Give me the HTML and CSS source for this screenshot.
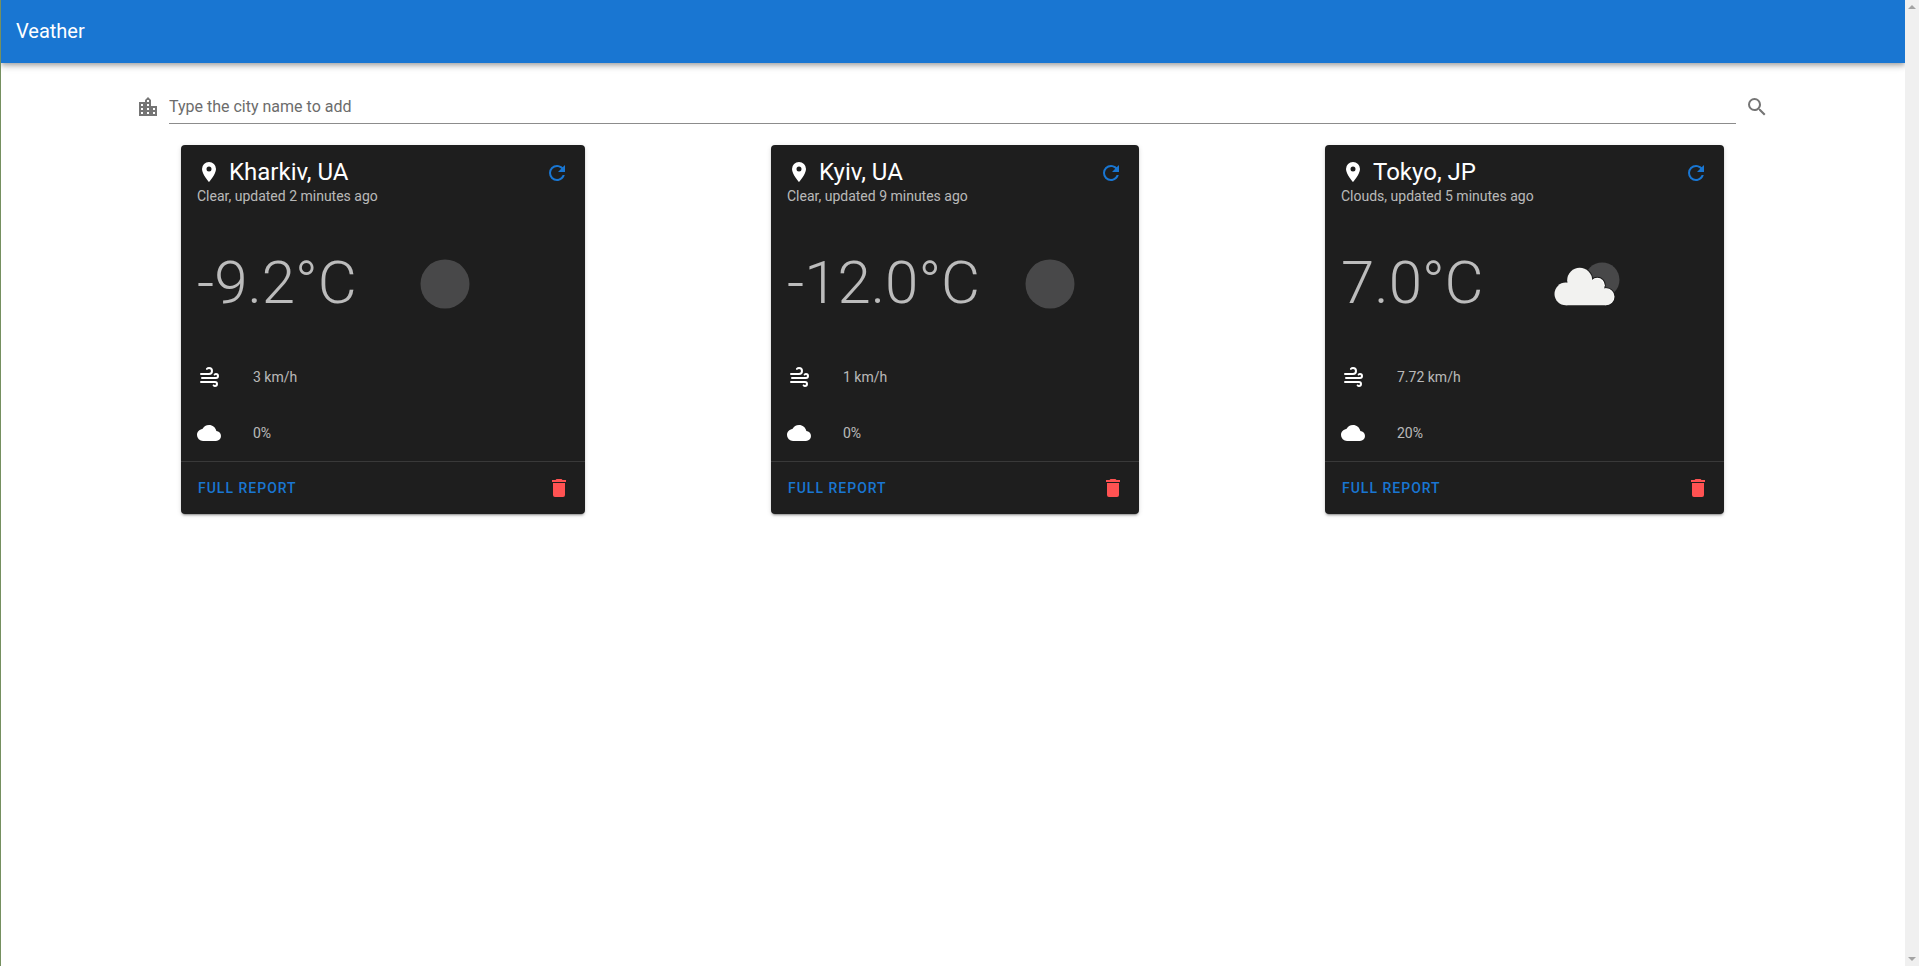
FILE: index.html
```html
<!DOCTYPE html>
<html lang="en">
<head>
<meta charset="utf-8">
<meta name="viewport" content="width=device-width, initial-scale=1">
<title>Veather</title>
<link rel="stylesheet" href="styles.css">
</head>
<body>
<svg class="sprite" aria-hidden="true">
  <symbol id="city" viewBox="0 0 24 24"><path d="M19,15H17V13H19M19,19H17V17H19M13,7H11V5H13M13,11H11V9H13M13,15H11V13H13M13,19H11V17H13M7,11H5V9H7M7,15H5V13H7M7,19H5V17H7M15,11V5L12,2L9,5V7H3V21H21V11H15Z"/></symbol>
  <symbol id="magnify" viewBox="0 0 24 24"><path d="M9.5,3A6.5,6.5 0 0,1 16,9.5C16,11.11 15.41,12.59 14.44,13.73L14.71,14H15.5L20.5,19L19,20.5L14,15.5V14.71L13.73,14.44C12.59,15.41 11.11,16 9.5,16A6.5,6.5 0 0,1 3,9.5A6.5,6.5 0 0,1 9.5,3M9.5,5C7,5 5,7 5,9.5C5,12 7,14 9.5,14C12,14 14,12 14,9.5C14,7 12,5 9.5,5Z"/></symbol>
  <symbol id="marker" viewBox="0 0 24 24"><path d="M12,11.5A2.5,2.5 0 0,1 9.5,9A2.5,2.5 0 0,1 12,6.5A2.5,2.5 0 0,1 14.5,9A2.5,2.5 0 0,1 12,11.5M12,2A7,7 0 0,0 5,9C5,14.25 12,22 12,22C12,22 19,14.25 19,9A7,7 0 0,0 12,2Z"/></symbol>
  <symbol id="refresh" viewBox="0 0 24 24"><path d="M17.65,6.35C16.2,4.9 14.21,4 12,4A8,8 0 0,0 4,12A8,8 0 0,0 12,20C15.73,20 18.84,17.45 19.73,14H17.65C16.83,16.33 14.61,18 12,18A6,6 0 0,1 6,12A6,6 0 0,1 12,6C13.66,6 15.14,6.69 16.22,7.78L13,11H20V4L17.65,6.35Z"/></symbol>
  <symbol id="wind" viewBox="0 0 24 24"><path d="M4,10A1,1 0 0,1 3,9A1,1 0 0,1 4,8H12A2,2 0 0,0 14,6A2,2 0 0,0 12,4C11.45,4 10.95,4.22 10.59,4.59C10.2,5 9.56,5 9.17,4.59C8.78,4.2 8.78,3.56 9.17,3.17C9.9,2.45 10.9,2 12,2A4,4 0 0,1 16,6A4,4 0 0,1 12,10H4M19,12A1,1 0 0,0 20,11A1,1 0 0,0 19,10C18.72,10 18.47,10.11 18.29,10.29C17.9,10.68 17.27,10.68 16.88,10.29C16.5,9.9 16.5,9.27 16.88,8.88C17.42,8.34 18.17,8 19,8A3,3 0 0,1 22,11A3,3 0 0,1 19,14H5A1,1 0 0,1 4,13A1,1 0 0,1 5,12H19M18,18H4A1,1 0 0,1 3,17A1,1 0 0,1 4,16H18A3,3 0 0,1 21,19A3,3 0 0,1 18,22C17.17,22 16.42,21.66 15.88,21.12C15.5,20.73 15.5,20.1 15.88,19.71C16.27,19.32 16.9,19.32 17.29,19.71C17.47,19.89 17.72,20 18,20A1,1 0 0,0 19,19A1,1 0 0,0 18,18Z"/></symbol>
  <symbol id="cloud" viewBox="0 0 24 24"><path d="M19.35,10.03C18.67,6.59 15.64,4 12,4C9.11,4 6.6,5.64 5.35,8.03C2.34,8.36 0,10.9 0,14A6,6 0 0,0 6,20H19A5,5 0 0,0 24,15C24,12.36 21.95,10.22 19.35,10.03Z"/></symbol>
  <symbol id="delete" viewBox="0 0 24 24"><path d="M19,4H15.5L14.5,3H9.5L8.5,4H5V6H19M6,19A2,2 0 0,0 8,21H16A2,2 0 0,0 18,19V7H6V19Z"/></symbol>
</svg>
<div class="app">
  <header class="app-bar"><h1 class="app-title">Veather</h1></header>
  <main class="content">
    <form class="search" role="search">
      <label class="search-label" for="city-name" aria-label="City name"><svg class="icon"><use href="#city"/></svg></label>
      <input class="search-input" id="city-name" type="text" placeholder="Type the city name to add">
      <button class="icon-button search-button" type="button" aria-label="Search"><svg class="icon"><use href="#magnify"/></svg></button>
    </form>
    <div class="cards">
      <article class="card">
        <header class="card-header">
          <div class="card-heading">
            <h2 class="card-title"><svg class="icon"><use href="#marker"/></svg>Kharkiv, UA</h2>
            <p class="card-subtitle">Clear, updated 2 minutes ago</p>
          </div>
          <button class="icon-button refresh" type="button" aria-label="Refresh"><svg class="icon"><use href="#refresh"/></svg></button>
        </header>
        <div class="conditions">
          <div class="temperature">-9.2°C</div>
          <div class="weather"><svg class="weather-image" viewBox="0 0 100 100"><circle class="moon" cx="50" cy="50" r="24.5"/></svg></div>
        </div>
        <ul class="details">
          <li class="detail"><svg class="icon"><use href="#wind"/></svg>3 km/h</li>
          <li class="detail"><svg class="icon"><use href="#cloud"/></svg>0%</li>
        </ul>
        <footer class="card-actions">
          <button class="report" type="button">FULL REPORT</button>
          <button class="icon-button delete" type="button" aria-label="Delete"><svg class="icon"><use href="#delete"/></svg></button>
        </footer>
      </article>
      <article class="card">
        <header class="card-header">
          <div class="card-heading">
            <h2 class="card-title"><svg class="icon"><use href="#marker"/></svg>Kyiv, UA</h2>
            <p class="card-subtitle">Clear, updated 9 minutes ago</p>
          </div>
          <button class="icon-button refresh" type="button" aria-label="Refresh"><svg class="icon"><use href="#refresh"/></svg></button>
        </header>
        <div class="conditions">
          <div class="temperature">-12.0°C</div>
          <div class="weather"><svg class="weather-image" viewBox="0 0 100 100"><circle class="moon" cx="50" cy="50" r="24.5"/></svg></div>
        </div>
        <ul class="details">
          <li class="detail"><svg class="icon"><use href="#wind"/></svg>1 km/h</li>
          <li class="detail"><svg class="icon"><use href="#cloud"/></svg>0%</li>
        </ul>
        <footer class="card-actions">
          <button class="report" type="button">FULL REPORT</button>
          <button class="icon-button delete" type="button" aria-label="Delete"><svg class="icon"><use href="#delete"/></svg></button>
        </footer>
      </article>
      <article class="card">
        <header class="card-header">
          <div class="card-heading">
            <h2 class="card-title"><svg class="icon"><use href="#marker"/></svg>Tokyo, JP</h2>
            <p class="card-subtitle">Clouds, updated 5 minutes ago</p>
          </div>
          <button class="icon-button refresh" type="button" aria-label="Refresh"><svg class="icon"><use href="#refresh"/></svg></button>
        </header>
        <div class="conditions">
          <div class="temperature">7.0°C</div>
          <div class="weather">
            <svg class="weather-image" viewBox="0 0 100 100">
              <circle class="moon" cx="65.2" cy="45.8" r="17.3"/>
              <g class="cloud-gap"><circle cx="42.7" cy="46.3" r="12.5"/><circle cx="60.3" cy="51.3" r="7.5"/><circle cx="69" cy="62.7" r="8.5"/></g>
              <g class="cloud-rim"><circle cx="60.3" cy="51.3" r="7.5"/><circle cx="69" cy="62.7" r="8.5"/></g>
              <g class="cloud-body"><circle cx="28.8" cy="59.9" r="11.3"/><circle cx="42.7" cy="46.3" r="12.5"/><circle cx="59.6" cy="52.1" r="7.3"/><circle cx="68.4" cy="62.8" r="8.3"/><path d="M28.8 71.2V52L42 44L60 52L69 58V71.2Z"/></g>
            </svg>
          </div>
        </div>
        <ul class="details">
          <li class="detail"><svg class="icon"><use href="#wind"/></svg>7.72 km/h</li>
          <li class="detail"><svg class="icon"><use href="#cloud"/></svg>20%</li>
        </ul>
        <footer class="card-actions">
          <button class="report" type="button">FULL REPORT</button>
          <button class="icon-button delete" type="button" aria-label="Delete"><svg class="icon"><use href="#delete"/></svg></button>
        </footer>
      </article>
    </div>
  </main>
</div>
<div class="scrollbar" aria-hidden="true">
  <svg class="scroll-arrow" viewBox="0 0 14 14"><path d="M7 5L11 9H3Z"/></svg>
  <svg class="scroll-arrow" viewBox="0 0 14 14"><path d="M7 9L3 5H11Z"/></svg>
</div>
</body>
</html>
```

FILE: styles.css
```css
* {
  box-sizing: border-box;
}

body {
  display: flex;
  min-height: 100vh;
  margin: 0;
  border-left: 1px solid #759060;
  background: #fff;
  font-family: Roboto, "Liberation Sans", sans-serif;
  font-size: 16px;
}

.sprite {
  display: none;
}

.icon {
  display: block;
  flex: none;
  width: 24px;
  height: 24px;
  fill: currentColor;
}

.icon-button {
  flex: none;
  padding: 0;
  border: 0;
  background: none;
  color: inherit;
  cursor: pointer;
}

.app {
  flex: 1;
  min-width: 0;
  overflow: hidden;
}

.app-bar {
  display: flex;
  align-items: center;
  height: 63px;
  padding: 0 15px 2px;
  background: #1976d2;
  color: #fff;
  box-shadow: 0 2px 4px -1px rgba(0, 0, 0, 0.2), 0 4px 5px 0 rgba(0, 0, 0, 0.14), 0 1px 10px 0 rgba(0, 0, 0, 0.12);
}

.app-title {
  margin: 0;
  font-size: 20px;
  font-weight: 400;
  line-height: 30px;
}

.content {
  max-width: 1680px;
  margin: 0 auto;
  padding: 28px 24px 28px 23px;
}

.search {
  display: flex;
  align-items: center;
  gap: 9px;
  color: #757575;
}

.search-label,
.search-button {
  padding-bottom: 1px;
}

.search-input {
  flex: 1;
  min-width: 0;
  height: 33px;
  padding: 0 0 2px;
  border: 0;
  border-bottom: 1px solid #8c8c8c;
  outline: 0;
  background: none;
  color: rgba(0, 0, 0, 0.87);
  font: inherit;
}

.search-input::placeholder {
  color: #6c6c6c;
  opacity: 1;
}

.cards {
  display: grid;
  grid-template-columns: 404fr 368fr 399fr;
  gap: 186px;
  margin-top: 21px;
  padding: 0 45px;
}

.card {
  border-radius: 4px;
  background: #1e1e1e;
  color: #fff;
  box-shadow: 0 3px 1px -2px rgba(0, 0, 0, 0.2), 0 2px 2px 0 rgba(0, 0, 0, 0.14), 0 1px 5px 0 rgba(0, 0, 0, 0.12);
}

.card-header {
  display: flex;
  justify-content: space-between;
  align-items: flex-start;
  padding: 12px 16px;
}

.card-title {
  display: flex;
  align-items: center;
  gap: 8px;
  margin: 0;
  font-size: 24px;
  font-weight: 400;
  line-height: 30px;
}

.card-subtitle {
  margin: 0;
  color: rgba(255, 255, 255, 0.7);
  font-size: 14px;
  line-height: 18px;
}

.refresh {
  padding-top: 4px;
  color: #1976d2;
}

.conditions {
  display: flex;
  align-items: center;
  min-height: 132px;
}

.temperature {
  flex: 1 0 50%;
  padding: 0 8px 0 16px;
  color: rgba(255, 255, 255, 0.7);
  font-size: 60px;
  font-weight: 300;
  line-height: 60px;
  white-space: nowrap;
}

/* The picture keeps its own width, so a long temperature takes the spare room. */
.weather {
  flex: 0 1 50%;
  padding: 1px 0 0 12px;
}

.weather-image {
  display: block;
  width: 100px;
  height: 100px;
}

.moon {
  fill: #484849;
}

.cloud-gap {
  fill: #1e1e1e;
  stroke: #1e1e1e;
  stroke-width: 2;
}

.cloud-rim {
  fill: #fff;
}

.cloud-body {
  fill: #f2f2f0;
}

.details {
  margin: 0;
  padding: 0;
  list-style: none;
}

.detail {
  display: flex;
  align-items: center;
  gap: 32px;
  height: 56px;
  padding: 0 16px;
  color: rgba(255, 255, 255, 0.7);
  font-size: 14px;
}

.detail .icon {
  fill: #fff;
}

.card-actions {
  display: flex;
  justify-content: space-between;
  align-items: center;
  height: 53px;
  padding: 0 14px 0 17px;
  border-top: 1px solid #393939;
}

.report {
  padding: 0;
  border: 0;
  background: none;
  color: #1976d2;
  font: 500 14px/36px Roboto, "Liberation Sans", sans-serif;
  letter-spacing: 1px;
  cursor: pointer;
}

.delete {
  color: #ff5252;
}

.scrollbar {
  position: sticky;
  top: 0;
  display: flex;
  flex-direction: column;
  justify-content: space-between;
  flex: none;
  width: 14px;
  height: 100vh;
  background: #f0f0f0;
}

.scroll-arrow {
  display: block;
  width: 14px;
  height: 14px;
  fill: #a3a3a3;
}

@media (max-width: 1500px) {
  .cards {
    grid-template-columns: repeat(auto-fit, minmax(340px, 1fr));
    gap: 32px;
  }
}
```
